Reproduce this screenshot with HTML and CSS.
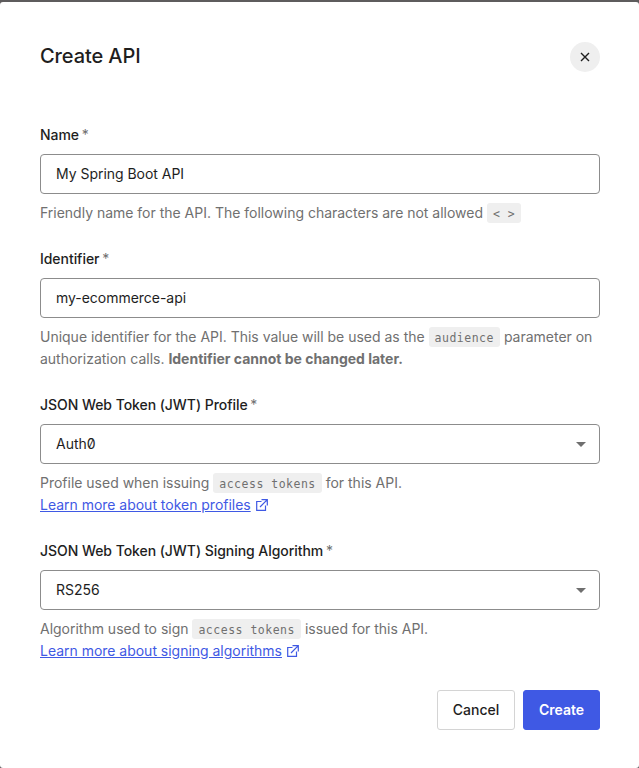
FILE: index.html
```html
<!DOCTYPE html>
<html lang="en">
<head>
<meta charset="utf-8">
<title>Create API</title>
<link rel="stylesheet" href="styles.css">
</head>
<body>
<main class="dialog">
  <header class="header">
    <h1>Create API</h1>
    <button class="close" aria-label="Close"><svg width="10" height="10" viewBox="0 0 10 10"><path d="M1 1l8 8M9 1l-8 8" fill="none" stroke="currentColor" stroke-width="1.4"/></svg></button>
  </header>
  <form class="form">
    <div class="field">
      <label><span>Name</span> <span class="req">*</span></label>
      <div class="control">My Spring Boot API</div>
      <p class="hint">Friendly name for the API. The following characters are not allowed <code>&lt; &gt;</code></p>
    </div>
    <div class="field">
      <label><span>Identifier</span> <span class="req">*</span></label>
      <div class="control">my-ecommerce-api</div>
      <p class="hint">Unique identifier for the API. This value will be used as the <code>audience</code> parameter on<br>authorization calls. <strong>Identifier cannot be changed later.</strong></p>
    </div>
    <div class="field">
      <label><span>JSON Web Token (JWT) Profile</span> <span class="req">*</span></label>
      <div class="control select">Auth0<svg width="10" height="5" viewBox="0 0 10 5"><path d="M0 0h10L5 5z" fill="currentColor"/></svg></div>
      <p class="hint">Profile used when issuing <code>access tokens</code> for this API.<br><a>Learn more about token profiles</a><svg class="ext" width="12" height="12" viewBox="0 0 12 12"><path d="M5.500 2.500H.7v8.800h8.800V6.500M5.500.7h5.800v5.800M11.300.7L4 8" fill="none" stroke="currentColor" stroke-width="1.200"/></svg></p>
    </div>
    <div class="field">
      <label><span>JSON Web Token (JWT) Signing Algorithm</span> <span class="req">*</span></label>
      <div class="control select">RS256<svg width="10" height="5" viewBox="0 0 10 5"><path d="M0 0h10L5 5z" fill="currentColor"/></svg></div>
      <p class="hint">Algorithm used to sign <code>access tokens</code> issued for this API.<br><a>Learn more about signing algorithms</a><svg class="ext" width="12" height="12" viewBox="0 0 12 12"><path d="M5.500 2.500H.7v8.800h8.800V6.500M5.500.7h5.800v5.800M11.300.7L4 8" fill="none" stroke="currentColor" stroke-width="1.200"/></svg></p>
    </div>
  </form>
  <footer class="footer"><button class="btn">Cancel</button><button class="btn primary">Create</button></footer>
</main>
</body>
</html>
```
FILE: styles.css
```css
* { box-sizing: border-box; }
body { margin: 0; background: #5e5c5d; font: 14px/22px Inter, sans-serif; color: #1e1e1e; padding-top: 2px; }
button { font: inherit; color: inherit; }
.dialog { height: 766px; background: #fff; border-radius: 3px; padding: 40px 39px 0 40px; }
.header { display: flex; align-items: center; justify-content: space-between; height: 30px; margin-bottom: 52px; }
h1 { margin: 0 0 2px; font-size: 20px; line-height: 28px; font-weight: 500; letter-spacing: -0.1px; }
.close { width: 30px; height: 30px; border: 0; border-radius: 50%; background: #efefef; padding: 0; display: flex; align-items: center; justify-content: center; }
.form { display: flex; flex-direction: column; gap: 24px; }
label { display: block; height: 22px; font-weight: 500; letter-spacing: -0.05px; margin-bottom: 8px; }
.req { color: #6f6f6f; font-weight: 400; margin-left: -1px; }
.control { height: 40px; border: 1px solid #8c8c8c; border-radius: 4px; padding: 0 15px; display: flex; align-items: center; justify-content: space-between; font-feature-settings: "zero"; letter-spacing: -0.03px; }
.select { padding-right: 13px; }
.control svg { color: #6f6f6f; }
.hint { margin: 8px 0 0; color: #707070; white-space: nowrap; letter-spacing: -0.01px; }
code { display: inline-block; height: 20px; margin-top: 1px; vertical-align: top; font: 11.5px/22px "DejaVu Sans Mono", monospace; letter-spacing: 0.5px; background: #efefef; border-radius: 3px; padding: 0 6px; }
a { color: #3f59e4; text-decoration: underline; letter-spacing: -0.02px; }
.ext { color: #3f59e4; margin-left: 5px; vertical-align: -1px; }
.footer { display: flex; justify-content: flex-end; gap: 8px; margin-top: 28px; }
.btn { height: 40px; width: 78px; border: 1px solid #d4d4d4; border-radius: 3px; background: #fff; font-weight: 500; padding: 0; }
.primary { width: 77px; background: #3f59e4; border-color: #3f59e4; color: #fff; font-weight: 600; }
```
